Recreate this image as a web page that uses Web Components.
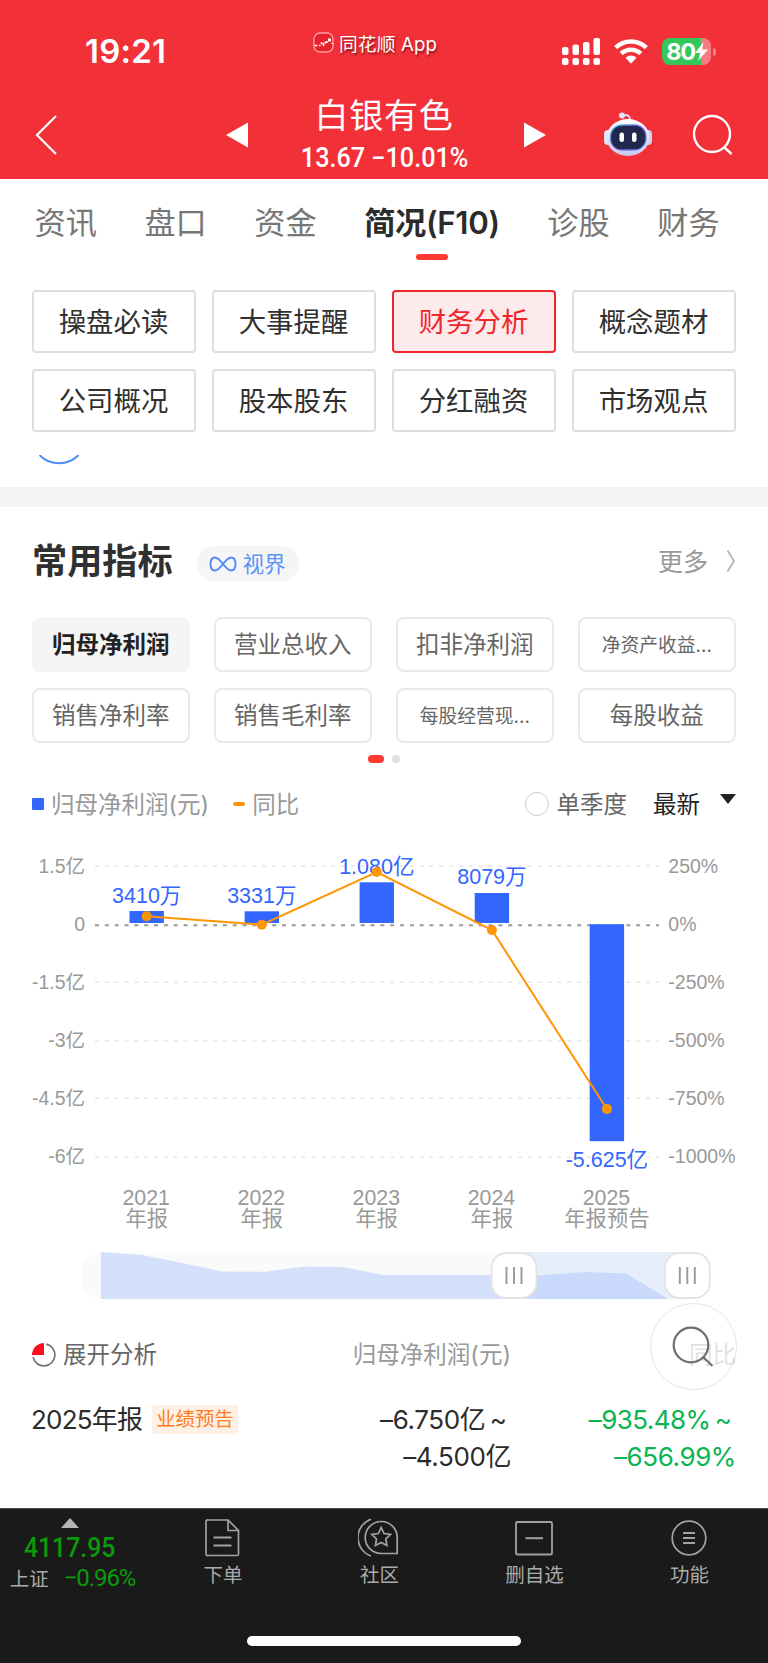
<!DOCTYPE html>
<html lang="zh-CN">
<head>
<meta charset="UTF-8">
<meta name="viewport" content="width=768">
<title>白银有色 - 简况(F10)</title>
<style>
  html, body { margin: 0; padding: 0; background: #fff; }
  body {
    width: 768px;
    height: 1663px;
    overflow: hidden;
    font-family: Inter, "Noto Sans CJK SC", sans-serif;
    color: #333;
  }
</style>
</head>
<body>
<stock-app></stock-app>

<script>
/* ---------- iconos ---------- */
const ICONS = {
  logo: [22, 22, `
    <rect x="1" y="1" width="19" height="19" rx="6" fill="#e8222c" stroke="#ff9a9c" stroke-width="1.4"/>
    <path d="M1.500 13.500h3M6 13.500h1.500M8 10.500l1 1.500M10.500 10.500v3.500M12.500 9.500v2M14 9v2" stroke="#fff" stroke-width="1.600"/>
    <rect x="15" y="6.500" width="3" height="3" fill="#fff"/><path d="M18.500 11.500h2" stroke="#fff"/>`],
  signal: [38, 27, `<g fill="#fff">
    <rect x="0" y="9" width="6.500" height="8" rx="2"/><rect x="10.500" y="6.500" width="6.500" height="10.500" rx="2"/>
    <rect x="21" y="4" width="6.500" height="13" rx="2"/><rect x="31.500" y="0" width="6.500" height="17" rx="2"/>
    <rect x="0" y="20" width="6.500" height="7" rx="2"/><rect x="10.500" y="20" width="6.500" height="7" rx="2"/>
    <rect x="21" y="20" width="6.500" height="7" rx="2"/><rect x="31.500" y="20" width="6.500" height="7" rx="2"/></g>`],
  wifi: [34, 25, `<g fill="none" stroke="#fff" stroke-width="4.600">
    <path d="M1.700 8.700a22 22 0 0 1 30.600 0"/><path d="M7.300 14.700a14 14 0 0 1 19.400 0"/></g>
    <path d="M11.500 18.800a8 8 0 0 1 11 0L17 24.800z" fill="#fff"/>`],
  back: [24, 42, `<path d="M22 2 3 21l19 19" fill="none" stroke="#fff" stroke-width="2.200"/>`],
  prev: [24, 26, `<path d="M1 13 23 .5v25z" fill="#fff"/>`],
  next: [24, 26, `<path d="M23 13 1 .5v25z" fill="#fff"/>`],
  robot: [48, 46, `
    <defs>
      <linearGradient id="head" x1="0" y1="0" x2="0" y2="1"><stop offset="0" stop-color="#fff"/><stop offset="1" stop-color="#c9cbee"/></linearGradient>
      <linearGradient id="edge" x1="0" y1="0" x2="1" y2="1"><stop offset="0" stop-color="#4ecbe8"/><stop offset=".5" stop-color="#7a4fe0"/><stop offset="1" stop-color="#5fa6f5"/></linearGradient>
    </defs>
    <path d="M19 3.500q7-1.500 7 4" fill="none" stroke="#e6e8fa" stroke-width="1.800"/><circle cx="18" cy="3.500" r="3" fill="#e3e6fa"/>
    <rect x="0" y="18" width="8" height="15" rx="4" fill="#e2e4f8"/><rect x="40" y="18" width="8" height="15" rx="4" fill="#cdd0ee"/>
    <ellipse cx="24" cy="25.500" rx="21.500" ry="18.500" fill="url(#head)"/>
    <rect x="6.500" y="13" width="35.500" height="25" rx="11.500" fill="#20294d" stroke="url(#edge)" stroke-width="1.300"/>
    <rect x="15.500" y="20.500" width="4.500" height="9.500" rx="2.200" fill="#fff"/><rect x="28" y="20.500" width="4.500" height="9.500" rx="2.200" fill="#fff"/>`],
  search: [42, 42, `<g fill="none" stroke="#fff" stroke-width="2.400"><circle cx="20" cy="20" r="18"/><path d="m32 33 7.500 7"/></g>`],
  infinity: [28, 18, `<path d="M14 9C10.500 4.500 8.500 2.500 6 2.500c-3 0-4.500 3-4.500 6.500s1.500 6.500 4.500 6.500c2.500 0 4.500-2 8-6.500s5.500-6.500 8-6.500c3 0 4.500 3 4.500 6.500s-1.500 6.500-4.500 6.500c-2.500 0-4.500-2-8-6.500z" fill="none" stroke="#5189f5" stroke-width="1.900"/>`],
  more: [10, 24, `<path d="m1.500 1.500 6.500 10.500-6.500 10.500" fill="none" stroke="#b8b8b8" stroke-width="1.900"/>`],
  down: [16, 10, `<path d="M0 0h16L8 10z" fill="#222"/>`],
  pie: [24, 24, `<path d="M12 12V0A12 12 0 0 0 0 12z" fill="#ff0d1e"/>
    <path d="M14.200 1.200a11 11 0 1 1-13.100 13" fill="none" stroke="#737373" stroke-width="1.700"/>`],
  up: [18, 10, `<path d="M9 0 18 10H0z" fill="#b5b5b5"/>`],
  order: [35, 38, `<g fill="none" stroke="#a3a3a3" stroke-width="1.700"><path d="M3 1h20l10.500 10.500V35a1.500 1.500 0 0 1-1.500 1.500H3A1.500 1.500 0 0 1 1 35V2.500A1.500 1.500 0 0 1 3 1z"/><path d="M23 1v10.500h10.500"/><path d="M8.500 18.500h18M8.500 26.500h18" stroke-width="2"/></g>`],
  community: [41, 39, `<g fill="none" stroke="#a3a3a3" stroke-width="1.700">
    <path d="M39.200 35.500V20A16 16 0 1 0 23.500 35.500z"/><path d="M13 1.200a19.500 19.500 0 0 0 0 36.800"/>
    <path d="m23.200 9.500 2.800 6 6.500.9-4.700 4.600 1.100 6.500-5.700-3.100-5.800 3.100 1.100-6.500-4.700-4.600 6.500-.9z"/></g>`],
  remove: [38, 36, `<g fill="none" stroke="#a3a3a3" stroke-width="1.800"><rect x="1" y="2" width="36" height="32.500" rx="1.500"/><path d="M10.500 18.200h17.500" stroke-width="2"/></g>`],
  menu: [36, 36, `<g fill="none" stroke="#a3a3a3"><circle cx="18" cy="18" r="16.800" stroke-width="1.700"/><path d="M12 13h12M12 18h12M12 23h12" stroke-width="1.900"/></g>`],
};

/* <ui-icon name="search"> */
class UiIcon extends HTMLElement {
  connectedCallback() {
    const [w, h, body] = ICONS[this.getAttribute("name")];
    this.attachShadow({ mode: "open" }).innerHTML = `
      <style>:host { display: block; flex: none; } svg { display: block; }</style>
      <svg width="${w}" height="${h}" viewBox="0 0 ${w} ${h}">${body}</svg>`;
  }
}
customElements.define("ui-icon", UiIcon);

/* Barra de estado del teléfono */
class StatusBar extends HTMLElement {
  connectedCallback() {
    this.attachShadow({ mode: "open" }).innerHTML = `
      <style>
        :host { display: grid; grid-template-columns: 313px 248.500px 1fr; height: 94px; color: #fff; }
        .hora { padding: 31px 0 0 85px; font-size: 33px; line-height: 40px; font-weight: 600; letter-spacing: 0.200px; }
        .marca { display: flex; align-items: flex-start; gap: 4px; padding-top: 32px; }
        .marca span { margin-top: 1px; font-size: 18.700px; line-height: 24px; letter-spacing: 0.150px; text-shadow: 1px 2px 2px rgba(70,0,0,.6); white-space: nowrap; }
        .estado { display: flex; padding-top: 37.500px; }
        .wifi { margin: 1px 14px 0 14.500px; }
        .bateria {
          width: 49px; height: 27px; border-radius: 8px; display: flex; align-items: center; justify-content: center;
          background: linear-gradient(90deg, #34c759 80%, #f77c81 80%);
        }
        .bateria span { font-size: 23.500px; line-height: 27px; font-weight: 700; letter-spacing: -1.200px; margin-left: 1px; }
        .polo { width: 3px; height: 8px; margin: 10px 0 0 2px; background: #f77c81; border-radius: 0 3px 3px 0; }
      </style>
      <div class="hora">19:21</div>
      <div class="marca"><ui-icon name="logo"></ui-icon><span>同花顺 App</span></div>
      <div class="estado">
        <ui-icon name="signal"></ui-icon>
        <ui-icon class="wifi" name="wifi"></ui-icon>
        <div class="bateria"><span>80</span><svg width="13" height="19" viewBox="0 0 14 20"><path d="M9 0 0 11.500h5.500L3.500 20 14 7.800H7.800z" fill="#fff"/></svg></div>
        <div class="polo"></div>
      </div>`;
  }
}
customElements.define("status-bar", StatusBar);

/* Nombre de la acción y navegación */
class StockHeader extends HTMLElement {
  connectedCallback() {
    this.attachShadow({ mode: "open" }).innerHTML = `
      <style>
        :host { display: block; height: 179px; background: #f23038; color: #fff; }
        nav { display: grid; grid-template-columns: 225px 24px 274px 80px 89px 1fr; height: 85px; }
        .volver { margin: 20px 0 0 34px; }
        .flecha { margin-top: 27.500px; }
        .robot { margin: 17.500px 0 0 1px; }
        .buscar { margin-top: 20px; }
        .centro { text-align: center; }
        .nombre { font-size: 34px; line-height: 43px; letter-spacing: 0.700px; padding-right: 4px; }
        .precio { font-family: Roboto, sans-serif; font-weight: 500; font-size: 26.800px; line-height: 30px; margin-top: 5.500px; padding-right: 3px; white-space: nowrap; transform: scaleX(.94); }
      </style>
      <status-bar></status-bar>
      <nav>
        <ui-icon class="volver" name="back"></ui-icon>
        <ui-icon class="flecha" name="prev"></ui-icon>
        <div class="centro">
          <div class="nombre"><slot name="nombre"></slot></div>
          <div class="precio"><slot name="precio"></slot></div>
        </div>
        <ui-icon class="flecha" name="next"></ui-icon>
        <ui-icon class="robot" name="robot"></ui-icon>
        <ui-icon class="buscar" name="search"></ui-icon>
      </nav>`;
  }
}
customElements.define("stock-header", StockHeader);

/* <tab-item activa> */
class TabItem extends HTMLElement {
  connectedCallback() {
    this.attachShadow({ mode: "open" }).innerHTML = `
      <style>
        :host { display: flex; flex-direction: column; align-items: center; flex: none; font-size: 31.200px; line-height: 46px; color: #777; white-space: nowrap; }
        :host([activa]) { color: #2b2b2b; font-weight: 600; letter-spacing: -0.300px; }
        i { display: none; width: 32px; height: 6px; margin-top: 7.500px; border-radius: 3px; background: #ff3a30; }
        :host([activa]) i { display: block; }
      </style>
      <slot></slot><i></i>`;
  }
}
customElements.define("tab-item", TabItem);

/* <choice-chip tipo="menu|dato" activa corto> */
class ChoiceChip extends HTMLElement {
  connectedCallback() {
    this.attachShadow({ mode: "open" }).innerHTML = `
      <style>
        :host { display: flex; align-items: center; justify-content: center; box-sizing: border-box; white-space: nowrap; }
        :host([tipo="menu"]) { height: 63px; padding: 0 1px 4px 0; border: 2px solid #dedede; border-radius: 4px; font-size: 27.400px; color: #303030; }
        :host([tipo="menu"][activa]) { border-color: #f1262d; background: #fdeaea; color: #f1262d; }
        :host([tipo="dato"]) { height: 55px; padding: 0 0.500px 3px 0; border: 2px solid #e9e9e9; border-radius: 8px; font-size: 23.500px; color: #666; }
        :host([tipo="dato"][activa]) { border-color: #f5f5f5; background: #f5f5f5; color: #222; font-weight: 700; }
        :host([corto]) { font-size: 18.800px !important; }
      </style>
      <slot></slot>`;
  }
}
customElements.define("choice-chip", ChoiceChip);

/* Encabezado de sección */
class SectionHead extends HTMLElement {
  connectedCallback() {
    this.attachShadow({ mode: "open" }).innerHTML = `
      <style>
        :host { display: flex; align-items: center; height: 110px; padding: 0 32px; }
        h2 { margin: -2px 0 0; font-size: 35.200px; line-height: 50px; font-weight: 700; color: #303030; }
        .pildora { display: flex; align-items: center; gap: 6px; box-sizing: border-box; width: 102px; height: 35px; margin: 3px auto 0 24px; padding: 0 0 0 12px; border-radius: 18px; background: #f5f5f5; color: #5c93f7; font-size: 21.400px; }
        .pildora span { margin-top: -2px; }
        .mas { color: #999; font-size: 25px; margin: -5px 18px 0 0; }
        .ir { margin-top: -2px; }
      </style>
      <h2><slot></slot></h2>
      <div class="pildora"><ui-icon name="infinity"></ui-icon><span>视界</span></div>
      <span class="mas">更多</span><ui-icon class="ir" name="more"></ui-icon>`;
  }
}
customElements.define("section-head", SectionHead);

/* Leyenda y filtros del gráfico */
class ChartLegend extends HTMLElement {
  connectedCallback() {
    this.attachShadow({ mode: "open" }).innerHTML = `
      <style>
        :host { display: flex; align-items: center; height: 36px; padding: 0 32px; font-size: 23.500px; color: #999; }
        span { margin-top: -3px; }
        .cuadro { width: 12px; height: 12px; margin-right: 7px; border-radius: 1px; background: #3266ff; }
        .raya { width: 12px; height: 4px; margin: 0 7px 0 24px; border-radius: 2px; background: #ff9500; }
        .radio { box-sizing: border-box; width: 24px; height: 24px; margin: 0 8px 0 auto; border: 1.500px solid #ccc; border-radius: 50%; }
        .trimestre { color: #666; margin-right: 26px; }
        .orden { color: #222; margin-right: 20px; }
        .abajo { margin-bottom: 10px; }
      </style>
      <i class="cuadro"></i><span>归母净利润(元)</span>
      <i class="raya"></i><span>同比</span>
      <i class="radio"></i><span class="trimestre">单季度</span>
      <span class="orden">最新</span><ui-icon class="abajo" name="down"></ui-icon>`;
  }
}
customElements.define("chart-legend", ChartLegend);

/* Barras (eje izquierdo) y línea de variación (eje derecho) */
class ProfitChart extends HTMLElement {
  connectedCallback() {
    const ejes = [
      ["1.5亿", "250%", 36], ["0", "0%", 95.300], ["-1.5亿", "-250%", 152.300],
      ["-3亿", "-500%", 211], ["-4.5亿", "-750%", 268.300], ["-6亿", "-1000%", 327.200],
    ];
    const datos = [
      { x: 146.700, ano: "2021", tipo: "年报", valor: "3410万", y: 81, alto: 12, texto: 73, punto: 86.200 },
      { x: 261.800, ano: "2022", tipo: "年报", valor: "3331万", y: 81.300, alto: 11.700, texto: 73, punto: 94.700 },
      { x: 376.800, ano: "2023", tipo: "年报", valor: "1.080亿", y: 52.300, alto: 40.700, texto: 43.500, punto: 42 },
      { x: 491.900, ano: "2024", tipo: "年报", valor: "8079万", y: 63, alto: 30, texto: 54.300, punto: 100 },
      { x: 606.900, ano: "2025", tipo: "年报预告", valor: "-5.625亿", y: 94.200, alto: 217, texto: 336.700, punto: 279 },
    ];
    const rejilla = ejes.map(([izq, der, y], i) => `
      <line x1="95" x2="659" y1="${y}" y2="${y}" stroke="${i === 1 ? "#999" : "#e6e6e6"}" stroke-width="${i === 1 ? 2 : 1.600}" stroke-dasharray="4 5.840"/>
      <text x="85" y="${42.500 + i * 58}" text-anchor="end">${izq}</text>
      <text x="668.300" y="${42.500 + i * 58}">${der}</text>`).join("");
    const barras = datos.map((d) => `<rect x="${d.x - 17.200}" y="${d.y}" width="34.400" height="${d.alto}" fill="#3266ff"/>`).join("");
    const valores = datos.map((d) => `<text class="valor" x="${d.x}" y="${d.texto}">${d.valor}</text>`).join("");
    const puntos = datos.map((d) => `<circle cx="${d.x}" cy="${d.punto}" r="5"/>`).join("");
    const anos = datos.map((d) => `<text class="ano" x="${d.x - 0.500}" y="375">${d.ano}</text><text class="ano" x="${d.x}" y="396.200">${d.tipo}</text>`).join("");

    this.attachShadow({ mode: "open" }).innerHTML = `
      <style>
        :host { display: block; height: 422px; }
        svg { display: block; font-family: "Liberation Sans", "Noto Sans CJK SC", sans-serif; }
        text { font-size: 19.500px; fill: #999; }
        .valor { font-size: 21.500px; fill: #3266ff; text-anchor: middle; }
        .ano { font-size: 21.300px; text-anchor: middle; }
      </style>
      <svg width="768" height="422" viewBox="0 0 768 422">
        ${rejilla}${barras}${valores}
        <polyline points="${datos.map((d) => `${d.x},${d.punto}`).join(" ")}" fill="none" stroke="#ff9500" stroke-width="2"/>
        <g fill="#ff9500">${puntos}</g>${anos}
      </svg>`;
  }
}
customElements.define("profit-chart", ProfitChart);

/* Selector de rango */
class RangeSlider extends HTMLElement {
  connectedCallback() {
    const area = "M101 0 142 3 180 10.500 222 19.500 265 19.800 305 14.500 343 15 383 23H543L585 20 626 21.500 668 47H101z";
    const asa = (x) => `
      <rect x="${x}" y="1" width="45" height="45" rx="15" fill="#fff" stroke="#e3e3e3" stroke-width="1.800"/>
      <path d="M${x + 15} 15v17M${x + 22.500} 15v17M${x + 30} 15v17" stroke="#999" stroke-width="1.900"/>`;
    this.attachShadow({ mode: "open" }).innerHTML = `
      <style>:host { display: block; height: 48px; } svg { display: block; }</style>
      <svg width="768" height="48" viewBox="0 0 768 48">
        <clipPath id="rango"><rect x="514" y="0" width="174" height="47"/></clipPath>
        <rect x="81" y="1" width="627" height="45" rx="19" fill="#fafafa"/>
        <path d="${area}" fill="#d3e0fa"/>
        <g clip-path="url(#rango)"><rect x="514" width="174" height="47" fill="#e7eefb"/><path d="${area}" fill="#c8d9fb"/></g>
        ${asa(491.500)}${asa(664.800)}
      </svg>`;
  }
}
customElements.define("range-slider", RangeSlider);

/* Tabla de análisis */
class AnalysisTable extends HTMLElement {
  connectedCallback() {
    this.attachShadow({ mode: "open" }).innerHTML = `
      <style>
        :host { display: block; padding: 0 32px; height: 208px; }
        .fila { display: grid; grid-template-columns: 240px 239px 1fr; }
        .cabeza { padding-top: 37px; font-size: 23.500px; line-height: 36px; color: #999; }
        .cabeza > * { text-align: right; }
        .cabeza .abrir { display: flex; align-items: center; gap: 7px; color: #666; }
        .cuerpo { padding-top: 28px; font-size: 26px; line-height: 37px; letter-spacing: -0.400px; color: #2b2b2b; }
        .periodo { display: flex; align-items: center; height: 37px; gap: 10px; margin-left: -1px; letter-spacing: -0.800px; white-space: nowrap; }
        .aviso { padding: 0 4px; height: 29px; margin-top: -1px; border-radius: 2px; background: #fff0e6; color: #ff7e1f; font-size: 19.400px; line-height: 28px; letter-spacing: 0; }
        .valor { text-align: right; word-spacing: -2.500px; }
        .valor div:first-child { padding-right: 4.500px; }
        .verde { color: #0ab44e; }
        .verde div:first-child { letter-spacing: -0.550px; }
      </style>
      <div class="fila cabeza">
        <div class="abrir"><ui-icon name="pie"></ui-icon><span>展开分析</span></div>
        <div>归母净利润(元)</div><div>同比</div>
      </div>
      <div class="fila cuerpo">
        <div class="periodo"><span>2025年报</span><span class="aviso">业绩预告</span></div>
        <div class="valor"><div>–6.750亿 ~</div><div>–4.500亿</div></div>
        <div class="valor verde"><div>–935.48% ~</div><div>–656.99%</div></div>
      </div>`;
  }
}
customElements.define("analysis-table", AnalysisTable);

/* Botón flotante de búsqueda */
class FloatSearch extends HTMLElement {
  connectedCallback() {
    this.attachShadow({ mode: "open" }).innerHTML = `
      <style>
        :host { position: absolute; left: 649.500px; top: 1303px; box-sizing: border-box; width: 87px; height: 87px; border: 1.500px solid #e4e4e4; border-radius: 50%; background: rgba(255,255,255,.7); }
        svg { display: block; }
      </style>
      <svg width="84" height="84" viewBox="0 0 84 84"><g fill="none" stroke="#6e6e6e" stroke-width="2.200"><circle cx="40" cy="41" r="17.300"/><path d="m52 53 9.500 9"/></g></svg>`;
  }
}
customElements.define("float-search", FloatSearch);

/* <bar-item icono="menu"> */
class BarItem extends HTMLElement {
  connectedCallback() {
    this.attachShadow({ mode: "open" }).innerHTML = `
      <style>
        :host { display: flex; flex-direction: column; align-items: center; font-size: 19.500px; line-height: 28px; color: #aaa; }
        .caja { display: flex; align-items: center; height: 39px; margin: 9px 2px 4px 0; }
      </style>
      <div class="caja"><ui-icon name="${this.getAttribute("icono")}"></ui-icon></div><slot></slot>`;
  }
}
customElements.define("bar-item", BarItem);

class BottomBar extends HTMLElement {
  connectedCallback() {
    this.attachShadow({ mode: "open" }).innerHTML = `
      <style>
        :host { display: block; box-sizing: border-box; height: 155px; background: #1a1a1a; border-top: 1px solid #4a4a4a; }
        .fila { display: grid; grid-template-columns: 144px 158px 155px 155px 155px; height: 127px; }
        .indice { display: flex; flex-direction: column; align-items: center; padding: 9px 5px 0 0; color: #aaa; }
        .puntos { font: 500 28px/30px Roboto, sans-serif; color: #0a9b0a; margin-top: 5px; transform: scaleX(.885); }
        .linea { display: flex; gap: 15px; align-items: center; font-size: 19.500px; line-height: 30px; white-space: nowrap; margin-top: 1px; padding-left: 6px; }
        .linea b { font: 400 24px/30px Roboto, sans-serif; letter-spacing: -1.100px; color: #0a9b0a; margin-top: -2px; }
        .inicio { width: 274px; height: 10px; border-radius: 5px; background: #fff; margin: 0 auto; }
      </style>
      <div class="fila">
        <div class="indice">
          <ui-icon name="up"></ui-icon>
          <div class="puntos">4117.95</div>
          <div class="linea"><span>上证</span><b>−0.96%</b></div>
        </div>
        <bar-item icono="order">下单</bar-item>
        <bar-item icono="community">社区</bar-item>
        <bar-item icono="remove">删自选</bar-item>
        <bar-item icono="menu">功能</bar-item>
      </div>
      <div class="inicio"></div>`;
  }
}
customElements.define("bottom-bar", BottomBar);

class StockApp extends HTMLElement {
  connectedCallback() {
    const menu = ["操盘必读", "大事提醒", "财务分析", "概念题材", "公司概况", "股本股东", "分红融资", "市场观点"];
    const datos = ["归母净利润", "营业总收入", "扣非净利润", "净资产收益...", "销售净利率", "销售毛利率", "每股经营现...", "每股收益"];
    const tabs = ["资讯", "盘口", "资金", "简况(F10)", "诊股", "财务"];

    this.attachShadow({ mode: "open" }).innerHTML = `
      <style>
        :host { display: block; position: relative; width: 768px; height: 1663px; background: #fff; overflow: hidden; }
        .tabs { display: flex; gap: 47.500px; height: 111px; padding: 21px 0 0 34.500px; box-sizing: border-box; }
        .menu { display: grid; grid-template-columns: repeat(4, 164px); gap: 16px; padding: 0 32px; height: 165px; align-content: start; }
        .cargando { height: 32px; padding-left: 38px; }
        .cargando svg { display: block; }
        .franja { height: 20px; background: #f4f4f4; }
        .datos { display: grid; grid-template-columns: repeat(4, 158px); column-gap: 24px; row-gap: 16px; padding: 0 32px; }
        .paginas { display: flex; justify-content: center; gap: 8px; height: 8px; margin: 12px 0 23px; }
        .paginas i { width: 8px; height: 8px; border-radius: 4px; background: #e0e0e0; }
        .paginas i:first-child { width: 16px; background: #ff3a30; }
        chart-legend { margin-bottom: 8px; }
      </style>
      <stock-header>
        <span slot="nombre">白银有色</span>
        <span slot="precio">13.67 −10.01%</span>
      </stock-header>
      <div class="tabs">${tabs.map((t, i) => `<tab-item ${i === 3 ? "activa" : ""}>${t}</tab-item>`).join("")}</div>
      <div class="menu">${menu.map((t, i) => `<choice-chip tipo="menu" ${i === 2 ? "activa" : ""}>${t}</choice-chip>`).join("")}</div>
      <div class="cargando"><svg width="42" height="10" viewBox="0 0 42 10"><path d="M1.500 0a27 27 0 0 0 39 0" fill="none" stroke="#4a90f7" stroke-width="2"/></svg></div>
      <div class="franja"></div>
      <section-head>常用指标</section-head>
      <div class="datos">${datos.map((t, i) => `<choice-chip tipo="dato" ${i === 0 ? "activa" : ""} ${t.endsWith("...") ? "corto" : ""}>${t}</choice-chip>`).join("")}</div>
      <div class="paginas"><i></i><i></i></div>
      <chart-legend></chart-legend>
      <profit-chart></profit-chart>
      <range-slider></range-slider>
      <analysis-table></analysis-table>
      <bottom-bar></bottom-bar>
      <float-search></float-search>`;
  }
}
customElements.define("stock-app", StockApp);
</script>
</body>
</html>
